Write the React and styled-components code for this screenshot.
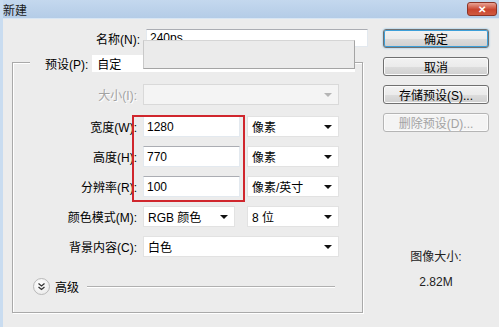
import styled, { createGlobalStyle } from 'styled-components'

const Global = createGlobalStyle`
    html, body {
        margin: 0;
        padding: 0;
        background: #ececec;
    }
    body {
        font-family: "Liberation Sans", "Noto Sans CJK SC", sans-serif;
        font-size: 12px;
        color: #000;
    }
`

const Window = styled.div`
    position: relative;
    width: 499px;
    height: 327px;
    overflow: hidden;
    background: #ececec;
    box-sizing: border-box;
    border-left: 3px solid #c9dcf0;
`

const TitleBar = styled.div`
    height: 18px;
    display: flex;
    align-items: center;
    justify-content: space-between;
    padding: 0 2px 0 0;
    margin-left: -3px;
    background: linear-gradient(#c4d8ee, #b4cce7);
    border-bottom: 1px solid #d8e6f4;
`

const Title = styled.span`
    font-size: 12px;
    padding-left: 3px;
    color: #1a1a1a;
`

const CloseButton = styled.div`
    width: 30px;
    height: 14px;
    border: 1px solid #8b3427;
    border-radius: 3px;
    background: linear-gradient(#e9a395, #c9452f 55%, #d05a40);
    color: #fff;
    font-size: 10px;
    font-weight: bold;
    display: flex;
    align-items: center;
    justify-content: center;
    box-sizing: border-box;
`

const Body = styled.div`
    display: flex;
    padding-top: 10px;
`

const FormCol = styled.div`
    width: 353px;
    padding-left: 9px;
`

const NameRow = styled.div`
    display: grid;
    grid-template-columns: 128px 222px;
    column-gap: 6px;
    align-items: center;
    height: 18px;
`

const Label = styled.span`
    text-align: right;
    white-space: nowrap;
    color: ${p => (p.$disabled ? '#a3a3a3' : '#000')};
    text-shadow: ${p => (p.$disabled ? '1px 1px 0 #fff' : 'none')};
`

const TextBox = styled.div`
    height: ${p => p.$h || 21}px;
    box-sizing: border-box;
    background: #fff;
    border: 1px solid #e3e9ef;
    border-top-color: #abadb3;
    display: flex;
    align-items: center;
    padding-left: 3px;
    overflow: hidden;
`

const Group = styled.div`
    margin-top: 15px;
    width: 351px;
    height: 251px;
    box-sizing: border-box;
    border: 1px solid #a9a9a9;
    box-shadow: inset 1px 1px 0 #fff, 1px 1px 0 #fff;
    padding-bottom: 20px;
`

const GroupHead = styled.div`
    margin: -8px 0 0 17px;
    display: flex;
    align-items: center;
    height: 17px;
    background: #ececec;
    width: 315px;
`

const HeadLabel = styled.span`
    padding: 0 4px 0 15px;
    white-space: nowrap;
`

const PresetBox = styled.div`
    flex: 1;
    height: 17px;
    background: #fff;
    display: flex;
    align-items: center;
    padding-left: 5px;
`

const Rows = styled.div`
    display: flex;
    flex-direction: column;
    gap: 9px;
    margin-top: 12px;
`

const FieldRow = styled.div`
    display: grid;
    grid-template-columns: 124px ${p => p.$cols || '196px'};
    column-gap: 6px;
    align-items: center;
    margin-bottom: ${p => p.$extra || 0}px;
`

const Pair = styled.div`
    display: grid;
    grid-template-columns: ${p => p.$first || 97}px 92px;
    column-gap: ${p => (p.$first ? 196 - 92 - p.$first : 7)}px;
`

const Select = styled.div`
    height: 21px;
    box-sizing: border-box;
    background: ${p => (p.$disabled ? '#f4f4f4' : '#fff')};
    border: 1px solid ${p => (p.$disabled ? '#d9d9d9' : '#e2e2e2')};
    display: flex;
    align-items: center;
    padding: 0 6px 0 4px;
    &::after {
        content: '';
        margin-left: auto;
        border-left: 4px solid transparent;
        border-right: 4px solid transparent;
        border-top: 4px solid ${p => (p.$disabled ? '#b5b5b5' : '#111')};
    }
`

const Advanced = styled.div`
    display: flex;
    align-items: center;
    margin: 21px 0 0 20px;
    gap: 5px;
`

const ChevronCircle = styled.div`
    width: 15px;
    height: 15px;
    border-radius: 50%;
    border: 1px solid #b9b9b9;
    background: radial-gradient(circle at 40% 35%, #ffffff, #e6e6e6);
    display: flex;
    align-items: center;
    justify-content: center;
`

const Etched = styled.div`
    width: 248px;
    margin-left: 3px;
    border-top: 1px solid #b0b0b0;
    border-bottom: 1px solid #fff;
`

const SideCol = styled.div`
    width: 106px;
    margin-left: 18px;
    display: flex;
    flex-direction: column;
    gap: 9px;
`

const Button = styled.div`
    height: 19px;
    box-sizing: border-box;
    border: 1px solid ${p => (p.$disabled ? '#b5b5b5' : '#707070')};
    border-radius: 3px;
    background: ${p => (p.$disabled ? '#f4f4f4' : 'linear-gradient(#f2f2f2 0%, #ebebeb 50%, #dddddd 51%, #cfcfcf 100%)')};
    box-shadow: ${p => (p.$primary ? '0 0 0 1px #3c9fd9 inset, 0 0 2px #5fb6ea' : 'inset 0 0 0 1px #fbfbfb')};
    color: ${p => (p.$disabled ? '#a3a3a3' : '#000')};
    display: flex;
    align-items: center;
    justify-content: center;
    white-space: nowrap;
`

const SizeInfo = styled.div`
    margin-top: 106px;
    display: flex;
    flex-direction: column;
    align-items: center;
    gap: 11px;
    color: #222;
`

const Overlay = styled.div`
    position: absolute;
    left: 140px;
    top: 40px;
    width: 212px;
    height: 29px;
    box-sizing: border-box;
    background: #ebebeb;
    border: 1px solid #a4a4a4;
    border-top-color: #d5d5d5;
    border-left-color: #c9c9c9;
    box-shadow: 0 3px 0 #fff;
`

const Highlight = styled.div`
    position: absolute;
    left: 129px;
    top: 115px;
    width: 113px;
    height: 87px;
    box-sizing: border-box;
    border: 2px solid #d0262d;
`

export default function App() {
    return (
        <>
            <Global />
            <Window>
                <TitleBar>
                    <Title>新建</Title>
                    <CloseButton>✕</CloseButton>
                </TitleBar>
                <Body>
                    <FormCol>
                        <NameRow>
                            <Label>名称(N):</Label>
                            <TextBox $h={18}>240ps</TextBox>
                        </NameRow>
                        <Group>
                            <GroupHead>
                                <HeadLabel>预设(P):</HeadLabel>
                                <PresetBox>自定</PresetBox>
                            </GroupHead>
                            <Rows>
                                <FieldRow $extra={2}>
                                    <Label $disabled>大小(I):</Label>
                                    <Select $disabled />
                                </FieldRow>
                                <FieldRow>
                                    <Label>宽度(W):</Label>
                                    <Pair>
                                        <TextBox>1280</TextBox>
                                        <Select>像素</Select>
                                    </Pair>
                                </FieldRow>
                                <FieldRow>
                                    <Label>高度(H):</Label>
                                    <Pair>
                                        <TextBox>770</TextBox>
                                        <Select>像素</Select>
                                    </Pair>
                                </FieldRow>
                                <FieldRow>
                                    <Label>分辨率(R):</Label>
                                    <Pair>
                                        <TextBox>100</TextBox>
                                        <Select>像素/英寸</Select>
                                    </Pair>
                                </FieldRow>
                                <FieldRow>
                                    <Label>颜色模式(M):</Label>
                                    <Pair $first={92}>
                                        <Select>RGB 颜色</Select>
                                        <Select>8 位</Select>
                                    </Pair>
                                </FieldRow>
                                <FieldRow>
                                    <Label>背景内容(C):</Label>
                                    <Select>白色</Select>
                                </FieldRow>
                            </Rows>
                            <Advanced>
                                <ChevronCircle>
                                    <svg width="9" height="9" viewBox="0 0 9 9">
                                        <path d="M1.5 1.5 L4.5 4 L7.5 1.5 M1.5 5 L4.5 7.5 L7.5 5" fill="none" stroke="#333" strokeWidth="1.3" />
                                    </svg>
                                </ChevronCircle>
                                <span>高级</span>
                                <Etched />
                            </Advanced>
                        </Group>
                    </FormCol>
                    <SideCol>
                        <Button $primary>确定</Button>
                        <Button>取消</Button>
                        <Button>存储预设(S)...</Button>
                        <Button $disabled>删除预设(D)...</Button>
                        <SizeInfo>
                            <span>图像大小:</span>
                            <span>2.82M</span>
                        </SizeInfo>
                    </SideCol>
                </Body>
                <Overlay />
                <Highlight />
            </Window>
        </>
    )
}
